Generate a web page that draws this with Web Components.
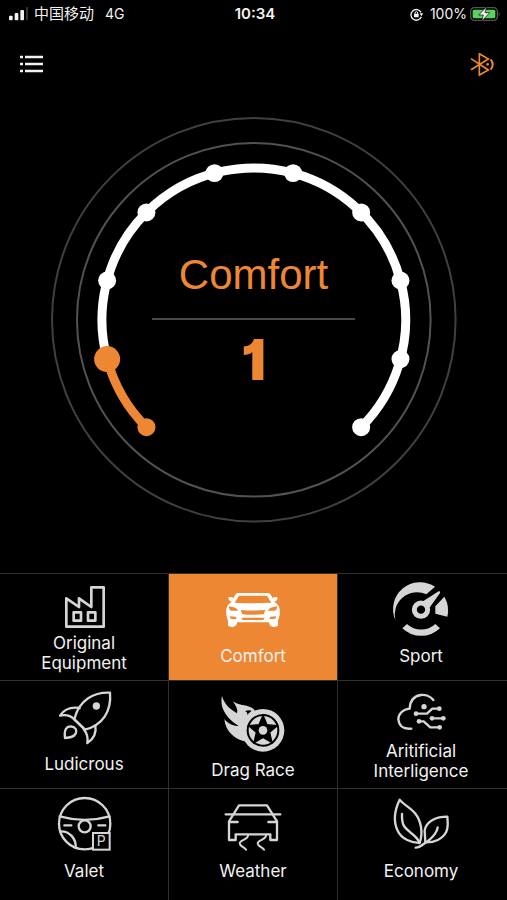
<!DOCTYPE html>
<html lang="en">
<head>
<meta charset="utf-8">
<meta name="viewport" content="width=device-width, initial-scale=1">
<title>Drive mode</title>
<style>
  body {
    margin: 0;
    background: #000;
    color: #f2f2f2;
    font-family: Inter, "Noto Sans CJK SC", sans-serif;
    --accent: #ee8733;
    --line: #303030;
    --icon: #d6d6d6;
  }
</style>
</head>
<body>
<drive-app></drive-app>

<script>
// viewBox origin and height (width is always 240) plus the drawing of every mode
const modes = [
  {
    name: 'Original Equipment', x: 133, y: 27, height: 59,
    icon: `<g class="line" stroke-width="8">
      <path d="M200 100L238 126V100L275 126V67H312V185H200Z"/>
      <path d="M222 142H244V167H222ZM265 142H287V167H265Z"/></g>`
  },
  {
    name: 'Comfort', x: 135, y: 27, height: 72, active: true,
    icon: `<path fill-rule="evenodd" d="M208 84H301Q305 84 308 89L316 103L315 98Q320 94 328 97Q331 106 318 110Q332 117 335 132V150L330 168V181Q328 186 316 186Q304 185 303 172H207Q206 185 194 186Q182 186 180 181V168L175 150V132Q178 117 192 110Q179 106 182 97Q190 94 196 98L195 103L202 89Q205 84 208 84ZM213 92L200 113Q255 116 310 113L297 92ZM183 124Q182 134 188 137H210Q207 127 183 124ZM327 124Q328 134 322 137H300Q303 127 327 124ZM218 135L223 148Q255 151 287 148L292 135Q255 138 218 135ZM185 154L189 162H206L203 155ZM325 154L321 162H304L307 155ZM220 158L224 165H286L290 158Z"/>`
  },
  {
    name: 'Sport', x: 130, y: 27, height: 72,
    icon: `<path d="M173 165A81 81 0 0 1 292 65L266 88A67 67 0 0 0 173 165Z"/>
      <path d="M293 124L320 95A81 81 0 0 1 329 155L293 146Z"/>
      <path d="M208 177A62 62 0 0 0 293 177L307 190A82 82 0 0 1 194 190Z"/>
      <path d="M256 109L303 79Q309 77 307 84L275 129Z"/>
      <circle class="line" cx="250" cy="134" r="20" stroke-width="15"/>`
  },
  {
    name: 'Ludicrous', x: 133, y: 3, height: 73,
    icon: `<g class="line" stroke-width="7">
      <path d="M331 38C285 36 238 58 224 118L256 149C308 136 336 95 331 38Z"/>
      <path d="M240 84C212 80 192 90 181 107C200 103 212 106 224 118L256 149"/>
      <path d="M287 136C291 160 280 178 263 189C266 172 262 160 252 148"/>
      <path d="M196 174C193 150 199 139 214 139C228 141 233 151 228 161C222 172 210 173 196 174Z"/></g>
      <circle cx="290" cy="78" r="11"/>`
  },
  {
    name: 'Drag Race', x: 135, y: 3, height: 79,
    icon: `<path d="M162 48C170 76 188 88 207 100C211 88 202 76 195 64C217 80 240 72 259 89L262 170L236 185C201 180 172 154 169 117C180 131 195 138 212 138C184 120 153 90 162 48Z"/>
      <path class="dark" d="M231 94Q240 88 251 92L237 105Q240 96 231 94Z"/>
      <circle cx="285" cy="151" r="64"/>
      <circle class="dark" cx="285" cy="151" r="49"/>
      <circle cx="285" cy="151" r="43"/>
      <path class="dark" stroke="#000" stroke-width="4" d="M285 106L297 134L328 137L305 157L312 188L285 172L258 188L265 157L242 137L273 134Z"/>
      <circle cx="285" cy="151" r="13"/>`
  },
  {
    name: 'Aritificial Interligence', x: 130, y: 3, height: 60,
    icon: `<g class="line" stroke-width="7">
      <path d="M287 60C278 48 262 43 250 45C230 48 217 62 216 86C195 88 182 102 182 118C184 138 198 148 221 146"/>
      <path d="M235 101H268L284 86H305M283 115H317M244 124H258L278 142H306"/></g>
      <circle cx="259" cy="80" r="8"/>
      <circle cx="235" cy="101" r="7"/><circle cx="305" cy="86" r="7"/>
      <circle cx="283" cy="115" r="7"/><circle cx="317" cy="115" r="7"/>
      <circle cx="244" cy="124" r="7"/><circle cx="306" cy="142" r="7"/>`
  },
  {
    name: 'Valet', x: 133, y: 15, height: 72,
    icon: `<g class="line" stroke-width="7">
      <circle cx="255" cy="119" r="77"/>
      <path d="M180 97Q255 118 330 97M194 124H215M296 124H317M181 142C211 140 230 166 228 191"/>
      <circle cx="255" cy="127" r="18"/></g>
      <rect class="dark" x="280" y="147" width="50" height="50" stroke="#d6d6d6" stroke-width="6"/>
      <text x="305" y="187" text-anchor="middle" font-size="42">P</text>`
  },
  {
    name: 'Weather', x: 135, y: 15, height: 72,
    icon: `<g class="line" stroke-width="7">
      <path d="M213 64L183 112V168H203V151H307V168H327V112L297 64Z"/>
      <path d="M173 91H337M186 114H209M301 114H325"/>
      <path d="M240 153C243 166 215 168 215 178C215 187 227 188 234 197M294 153C297 166 269 168 269 178C269 187 281 188 288 197" stroke-width="6"/></g>`
  },
  {
    name: 'Economy', x: 130, y: 15, height: 72,
    icon: `<g class="line" stroke-width="7">
      <path d="M186 47C170 80 168 115 180 140C192 166 222 176 246 177C257 145 250 110 232 88C218 70 198 63 186 47Z"/>
      <path d="M193 90C192 125 200 130 220 147Q238 160 245 175"/>
      <path d="M329 98C297 98 265 110 261 140L263 175C290 176 315 165 325 145C333 130 330 110 329 98Z"/>
      <path d="M300 130C297 150 275 170 262 177C250 186 245 191 234 191"/></g>`
  }
];

class StatusBar extends HTMLElement {
  constructor() {
    super();
    this.attachShadow({mode: 'open'}).innerHTML = `
    <style>
    :host {
      display: grid;
      grid-template-columns: 1fr auto 1fr;
      align-items: center;
      height: 28px;
      padding: 0 6px 0 9px;
      font-size: 14px;
      line-height: 20px;
    }
    div {
      display: flex;
      align-items: center;
    }
    .carrier { font-size: 15px; margin: 0 11px 0 6px; }
    .right { justify-content: flex-end; }
    .level { margin: 0 3px 0 7px; }
    b { font-size: 15px; font-weight: 600; }
    svg { display: block; fill: #f2f2f2; }
    </style>
    <div>
      <svg width="19" height="14" viewBox="27 20 57 42">
        <rect x="27" y="46" width="11" height="14" rx="3"/>
        <rect x="44" y="38" width="11" height="22" rx="3"/>
        <rect x="61" y="29" width="11" height="31" rx="3"/>
        <rect x="78" y="20" width="11" height="40" rx="3" fill="#333"/>
      </svg>
      <span class="carrier">中国移动</span><span>4G</span>
    </div>
    <b>10:34</b>
    <div class="right">
      <svg width="13" height="13" viewBox="0 0 39 39">
        <path d="M33 13A16 16 0 1 0 34 26" fill="none" stroke="#f2f2f2" stroke-width="4"/>
        <path d="M29 16H40L34 25Z"/>
        <rect x="12" y="17" width="14" height="11" rx="2"/>
        <path d="M15 18V15A4 4 0 0 1 23 15V18" fill="none" stroke="#f2f2f2" stroke-width="3"/>
      </svg>
      <span class="level">100%</span>
      <svg width="31" height="16" viewBox="0 0 93 48">
        <rect x="2" y="5" width="80" height="38" rx="11" fill="none" stroke="#555" stroke-width="4"/>
        <path d="M86 17Q92 24 86 31Z" fill="#555"/>
        <rect x="8" y="11" width="68" height="26" rx="5" fill="#5bd15f"/>
        <path d="M50 2L26 27H40L35 46L59 20H45Z" stroke="#000" stroke-width="2"/>
      </svg>
    </div>`;
  }
}

class NavBar extends HTMLElement {
  constructor() {
    super();
    this.attachShadow({mode: 'open'}).innerHTML = `
    <style>
    :host {
      display: flex;
      justify-content: space-between;
      align-items: center;
      height: 74px;
      padding: 0 5px 0 12px;
    }
    button {
      padding: 8px;
      border: 0;
      background: none;
    }
    svg { display: block; }
    </style>
    <button aria-label="Menu">
      <svg width="24" height="24" viewBox="0 0 24 24" stroke="#f2f2f2" stroke-width="2.6">
        <path d="M0 4H3M5 4H23M0 11H3M5 11H23M0 18H3M5 18H23"/>
      </svg>
    </button>
    <button aria-label="Bluetooth">
      <svg width="24" height="24" viewBox="651 159 72 72" fill="none" stroke="#ee8733" stroke-width="5">
        <path d="M654 176L706 210L679 225V161L706 177L654 209"/>
        <path d="M713 178Q725 193 713 209" stroke-width="6"/>
        <circle cx="704" cy="193" r="4" fill="#ee8733" stroke="none"/>
      </svg>
    </button>`;
  }
}

class ModeDial extends HTMLElement {
  constructor() {
    super();
    this.attachShadow({mode: 'open'});
  }

  connectedCallback() {
    this.render(Number(this.getAttribute('value')));
  }

  // ten stops, 30 degrees apart, from lower left clockwise to lower right
  stop(index) {
    const angle = (135 + index * 30) * Math.PI / 180;
    return [203 + 152 * Math.cos(angle), 203 + 152 * Math.sin(angle)];
  }

  render(value) {
    const arc = (from, to, color) => {
      const large = to - from > 6 ? 1 : 0;
      return `<path d="M${this.stop(from)}A152 152 0 ${large} 1 ${this.stop(to)}" fill="none" stroke="${color}" stroke-width="9"/>`;
    };
    let dots = '';
    for (let i = 0; i < 10; i++) {
      const [x, y] = this.stop(i);
      dots += `<circle cx="${x}" cy="${y}" r="${i === value ? 13 : 9}" fill="${i <= value ? '#ee8733' : '#fff'}"/>`;
    }
    this.shadowRoot.innerHTML = `
    <style>
    :host {
      display: grid;
      width: 80%;
      margin: 15px auto 0;
      color: var(--accent);
      text-align: center;
    }
    svg, .readout { grid-area: 1 / 1; }
    svg { display: block; width: 100%; overflow: visible; }
    .readout {
      align-self: center;
      justify-self: center;
      width: 50%;
    }
    .name {
      font-family: "Liberation Sans", sans-serif;
      font-size: 42px;
      line-height: 48px;
      padding: 5px 0 19px;
      border-bottom: 2px solid #4a4a4a;
    }
    .value {
      font-size: 56px;
      font-weight: 900;
      font-feature-settings: "cv01";
      line-height: 66px;
      padding-top: 7px;
    }
    </style>
    <svg viewBox="0 0 406 406">
      <circle cx="203" cy="203" r="202" fill="none" stroke="#404040" stroke-width="2"/>
      <circle cx="203" cy="203" r="177" fill="none" stroke="#525252" stroke-width="2"/>
      ${arc(value, 9, '#fff')}${arc(0, value, '#ee8733')}${dots}
    </svg>
    <div class="readout">
      <div class="name"><slot></slot></div>
      <div class="value">${value}</div>
    </div>`;
  }
}

class ModeTile extends HTMLElement {
  constructor() {
    super();
    this.attachShadow({mode: 'open'});
  }

  set mode(mode) {
    this._mode = mode;
    this.render();
  }

  render() {
    const {x, y, height, icon, active} = this._mode;
    this.shadowRoot.innerHTML = `
    <style>
    :host { display: grid; }
    button {
      display: flex;
      flex-direction: column;
      align-items: center;
      padding: 0 var(--edge, 32px) 7px 32px;
      border: 0;
      background: #000;
      color: #f2f2f2;
      font-family: inherit;
      font-size: 17px;
      line-height: 20px;
      --tint: var(--icon);
    }
    button[aria-pressed="true"] {
      background: var(--accent);
      --tint: #fff;
    }
    svg { display: block; flex: none; fill: var(--tint); }
    .line {
      fill: none;
      stroke: var(--tint);
      stroke-linecap: round;
      stroke-linejoin: round;
    }
    .dark { fill: #000; }
    </style>
    <button aria-pressed="${Boolean(active)}">
      <svg width="80" height="${height}" viewBox="${x} ${y} 240 ${height * 3}">${icon}</svg>
      <span><slot></slot></span>
    </button>`;
  }
}

class ModeGrid extends HTMLElement {
  constructor() {
    super();
    this.attachShadow({mode: 'open'}).innerHTML = `
    <style>
    :host {
      display: grid;
      grid-template-columns: 168fr 168fr 169fr;
      grid-template-rows: auto auto 1fr;
      gap: 1px;
      border-top: 1px solid var(--line);
      background: var(--line);
    }
    mode-tile:nth-of-type(3n) { --edge: 35px; }
    </style>`;
    modes.forEach(mode => {
      const tile = document.createElement('mode-tile');
      tile.mode = mode;
      tile.textContent = mode.name;
      this.shadowRoot.appendChild(tile);
    });
  }
}

class DriveApp extends HTMLElement {
  constructor() {
    super();
    this.attachShadow({mode: 'open'}).innerHTML = `
    <style>
    :host {
      display: flex;
      flex-direction: column;
      min-height: 100vh;
    }
    mode-grid { flex: 1; margin-top: 50px; }
    </style>
    <status-bar></status-bar>
    <nav-bar></nav-bar>
    <mode-dial value="1">Comfort</mode-dial>
    <mode-grid></mode-grid>`;
  }
}

customElements.define('status-bar', StatusBar);
customElements.define('nav-bar', NavBar);
customElements.define('mode-dial', ModeDial);
customElements.define('mode-tile', ModeTile);
customElements.define('mode-grid', ModeGrid);
customElements.define('drive-app', DriveApp);
</script>
</body>
</html>
